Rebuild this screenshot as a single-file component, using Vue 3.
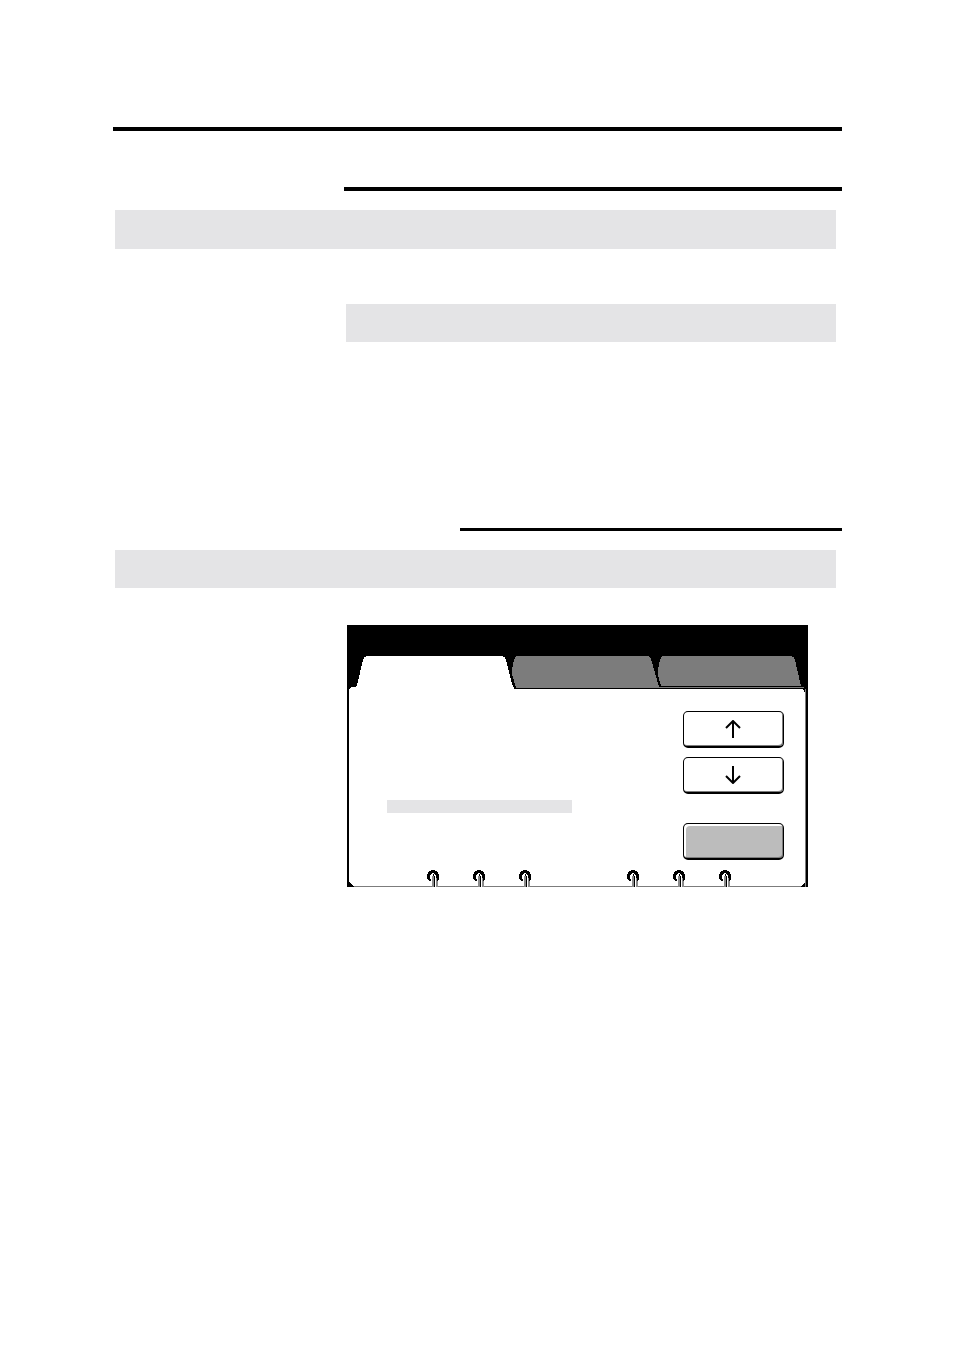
<template>
<main class="page">
  <hr class="rule">

  <section class="chapter">
    <hr class="rule indent">
    <div class="band"></div>
    <div class="band narrow"></div>
  </section>

  <section class="topic">
    <hr class="rule thin">
    <div class="band short"></div>

    <div class="panel">
      <div class="tabs" role="tablist">
        <button v-for="(tab, index) in tabs"
                :key="tab.name"
                class="tab"
                :class="{ active: index === current }"
                role="tab"
                :aria-label="tab.name"
                :aria-selected="index === current"
                @click="current = index">
          <svg :viewBox="'0 0 ' + tab.width + ' 33'" preserveAspectRatio="none" shape-rendering="crispEdges">
            <path :d="tab.shape" />
          </svg>
        </button>
      </div>

      <div class="body">
        <div class="content">
          <div class="list">
            <div class="selected"></div>
          </div>
          <div class="actions">
            <button class="key" aria-label="Up">
              <svg class="arrow" viewBox="0 0 17 18"><path d="M8 18V1M1 8L8 1L15 8" /></svg>
            </button>
            <button class="key" aria-label="Down">
              <svg class="arrow" viewBox="0 0 17 18"><path d="M8 0V17M1 10L8 17L15 10" /></svg>
            </button>
            <button class="key grey" aria-label="Close"></button>
          </div>
        </div>

        <div class="pins">
          <div v-for="group in 2" :key="group" class="group">
            <svg v-for="pin in 3" :key="pin" class="pin" viewBox="0 0 12 17" shape-rendering="crispEdges">
              <path class="white" d="M4 4H8V8H11V17H5V8H4Z" />
              <path class="shade" d="M5 6H7V17H5ZM9 8H11V17H9Z" />
              <path class="black" d="M4 0H8V1H10V2H11V4H12V10H11V11H10V8H9V5H8V4H7V3H5V4H4V5H3V9H4V11H2V10H1V9H0V4H1V2H2V1H4Z" />
              <path class="black" d="M6 4H7V6H8V17H7V6H6Z" />
            </svg>
          </div>
        </div>
        <svg class="corner left" viewBox="0 0 5 5" shape-rendering="crispEdges"><path d="M0 0L5 5H0Z" /></svg>
        <svg class="corner right" viewBox="0 0 5 5" shape-rendering="crispEdges"><path d="M5 0V5H0Z" /></svg>
        <svg class="corner top" viewBox="0 0 5 5" shape-rendering="crispEdges"><path d="M3 0H5V3H4V1H3Z" /></svg>
      </div>
    </div>
  </section>
</main>
</template>

<script setup>
import { ref } from 'vue'

// the open tab
const current = ref(0)

// the slanted sides reach a little past each tab's own box
const tabs = [
  {
    name: 'First',
    width: 163,
    shape: 'M2 34V33L4 31H7Q9 31 10 29L16 4Q17 0 21 0H154Q158 0 159 4L165 28L167 32V34Z'
  },
  {
    name: 'Second',
    width: 146,
    shape: 'M8 0H137Q140 0 141 3L149 31H294V32H6L4 25L2 18V14L4 4Q5 0 8 0Z'
  },
  {
    name: 'Third',
    width: 152,
    shape: 'M8 0H134Q138 0 139 4L145 30H5L2 19V14L4 4Q5 0 8 0Z'
  }
]
</script>

<style>
body {
  margin: 0;
  background: #fff;
}
</style>

<style scoped>
.page {
  box-sizing: border-box;
  min-height: 100vh;
  padding: 127px 112px 40px 113px;
  font-family: "Liberation Sans", Arial, sans-serif;
}
.rule {
  height: 4px;
  margin: 0;
  border: none;
  background: #000;
}
.chapter {
  margin-top: 56px;
}
.indent {
  margin-left: 231px;
}
.band {
  height: 39px;
  margin: 19px 6px 0 2px;
  background: #e4e4e6;
}
.narrow {
  height: 38px;
  margin-top: 55px;
  margin-left: 233px;
}
.topic {
  margin-top: 186px;
}
.thin {
  height: 3px;
  margin-left: 347px;
}
.short {
  height: 38px;
}
.panel {
  margin: 37px 34px 0 234px;
  padding-top: 31px;
  background: #000;
}
.tabs {
  display: grid;
  grid-template-columns: 163fr 146fr 152fr;
}
.tab {
  position: relative;
  height: 33px;
  padding: 0;
  border: none;
  background: none;
  cursor: pointer;
}
.tab svg {
  display: block;
  width: 100%;
  height: 33px;
  overflow: visible;
  fill: #7c7c7c;
}
.tab.active {
  z-index: 1;
}
.tab.active svg {
  fill: #fff;
}
.body {
  position: relative;
  margin: 0 2px;
  border-right: 1px solid #7c7c7c;
  background: #fff;
}
.content {
  display: flex;
  justify-content: space-between;
  padding: 22px 21px 10px 38px;
}
.list {
  width: 185px;
  padding-top: 89px;
}
.selected {
  height: 13px;
  background: #e4e4e6;
}
.actions {
  display: flex;
  flex-direction: column;
  gap: 9px;
}
.key {
  display: flex;
  align-items: center;
  justify-content: center;
  box-sizing: border-box;
  width: 101px;
  height: 37px;
  padding: 0;
  border: 1px solid #000;
  border-bottom-width: 2px;
  border-radius: 5px;
  background: #fff;
  box-shadow: inset -1px -1px #7c7c7c;
  cursor: pointer;
}
.grey {
  margin-top: 20px;
  background: #bcbcbc;
  box-shadow: inset -1px -1px #7c7c7c, inset 2px 2px #fff;
}
.arrow {
  width: 17px;
  height: 18px;
  fill: none;
  stroke: #000;
  stroke-width: 2;
}
.pins {
  display: flex;
  gap: 96px;
  height: 16px;
  padding-left: 78px;
  border-bottom: 1px solid #7c7c7c;
}
.group {
  display: flex;
  gap: 34px;
}
.pin {
  width: 12px;
  height: 17px;
}
.white {
  fill: #fff;
}
.shade {
  fill: #8c8c8c;
}
.black {
  fill: #000;
}
.corner {
  position: absolute;
  bottom: 0;
  width: 5px;
  height: 5px;
}
.left {
  left: 0;
}
.right {
  right: 0;
}
.top {
  top: 0;
  right: 0;
  bottom: auto;
}
</style>
